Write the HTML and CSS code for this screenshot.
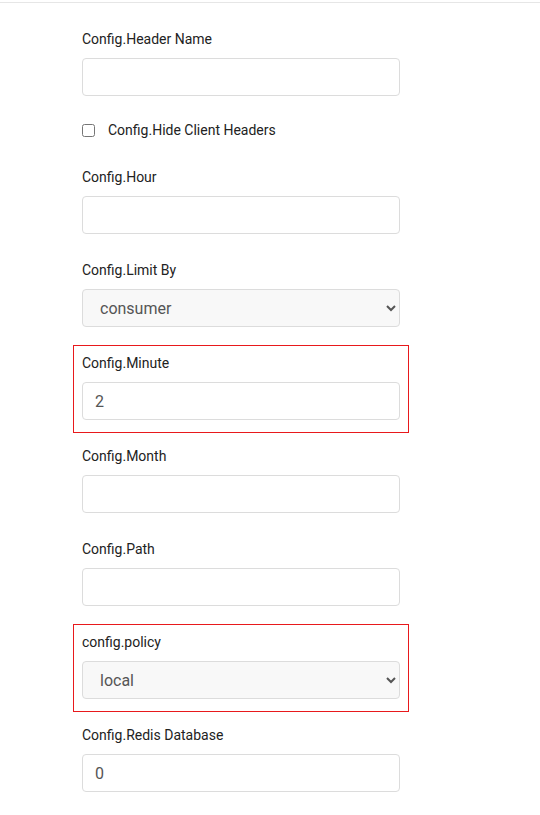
FILE: index.html
```html
<!DOCTYPE html>
<html>
<head>
<meta charset="utf-8">
<link rel="stylesheet" href="styles.css">
</head>
<body>
<div class="topline"></div>
<form class="form">
  <div class="group">
    <label class="label">Config.Header Name</label>
    <input class="control" type="text" value="">
  </div>
  <div class="check-row">
    <input class="check" type="checkbox" id="hide">
    <label class="check-label" for="hide">Config.Hide Client Headers</label>
  </div>
  <div class="group">
    <label class="label">Config.Hour</label>
    <input class="control" type="text" value="">
  </div>
  <div class="group">
    <label class="label">Config.Limit By</label>
    <select class="control select"><option>consumer</option></select>
  </div>
  <div class="group error">
    <label class="label">Config.Minute</label>
    <input class="control" type="text" value="2">
  </div>
  <div class="group">
    <label class="label">Config.Month</label>
    <input class="control" type="text" value="">
  </div>
  <div class="group">
    <label class="label">Config.Path</label>
    <input class="control" type="text" value="">
  </div>
  <div class="group error">
    <label class="label">config.policy</label>
    <select class="control select"><option>local</option></select>
  </div>
  <div class="group">
    <label class="label">Config.Redis Database</label>
    <input class="control" type="text" value="0">
  </div>
</form>
</body>
</html>
```

FILE: styles.css
```css
html, body {
  margin: 0;
  padding: 0;
  background: #fff;
}
body {
  font-family: Roboto, "Liberation Sans", Arial, sans-serif;
  color: #222;
  overflow: hidden;
}
.topline {
  margin-top: 2px;
  border-top: 1px solid #e6e6e6;
}
.form {
  padding: 18px 0 0 73px;
  width: 336px;
}
.group {
  box-sizing: border-box;
  width: 336px;
  border: 1px solid transparent;
  padding: 7px 8px 12px 8px;
  margin-bottom: 5px;
  display: flex;
  flex-direction: column;
}
.group.error {
  border-color: #e8191c;
}
.label {
  font-size: 14px;
  line-height: 20px;
  height: 20px;
  margin-bottom: 9px;
  color: #222;
}
.control {
  box-sizing: border-box;
  width: 318px;
  height: 38px;
  margin: 0;
  border: 1px solid #dcdcdc;
  border-radius: 4px;
  background: #fff;
  padding: 0 12px;
  font-family: Roboto, "Liberation Sans", Arial, sans-serif;
  font-size: 16px;
  color: #555;
  outline: none;
}
.select {
  background: #f8f8f8;
  padding-left: 13px;
}
.check-row {
  display: flex;
  align-items: center;
  padding: 6px 9px 19px 9px;
  height: 20px;
}
.check {
  width: 13px;
  height: 13px;
  margin: 0 13px 0 0;
}
.check-label {
  font-size: 14px;
  line-height: 20px;
  color: #222;
}
```
